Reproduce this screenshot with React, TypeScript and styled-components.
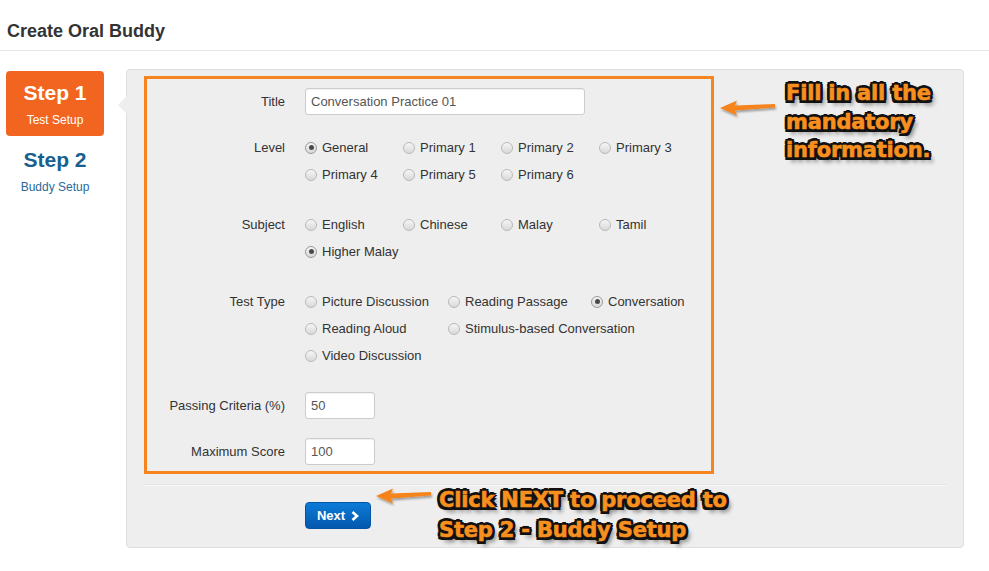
import React from "react";
import styled, { createGlobalStyle } from "styled-components";

const Global = createGlobalStyle`
  html, body { margin: 0; padding: 0; background: #fff; }
  body { font-family: "Liberation Sans", Arial, sans-serif; color: #333; }
  * { box-sizing: border-box; }
`;

const Page = styled.div`
  width: 989px;
  min-height: 571px;
`;

const Header = styled.header`
  height: 51px;
  padding: 21px 0 0 7px;
  border-bottom: 1px solid #e6e6e6;
`;

const PageTitle = styled.h1`
  margin: 0;
  font-size: 18px;
  line-height: 20px;
  font-weight: bold;
  color: #333;
`;

const Main = styled.div`
  display: flex;
  align-items: flex-start;
  gap: 22px;
  padding: 18px 0 0 6px;
`;

const Sidebar = styled.nav`
  width: 98px;
  padding-top: 2px;
  display: flex;
  flex-direction: column;
`;

const StepBox = styled.div<{ $active?: boolean }>`
  border-radius: 4px;
  text-align: center;
  padding: ${(p) => (p.$active ? "10px 0 8px" : "12px 0 0")};
  background: ${(p) => (p.$active ? "#f26521" : "transparent")};
  color: ${(p) => (p.$active ? "#fff" : "#17608f")};
`;

const StepTitle = styled.div`
  font-size: 21px;
  line-height: 24px;
  font-weight: bold;
`;

const StepSub = styled.div<{ $active?: boolean }>`
  margin-top: 7px;
  font-size: 12px;
  line-height: 16px;
  color: ${(p) => (p.$active ? "#fff" : "#2b6a99")};
`;

const Panel = styled.section`
  position: relative;
  width: 838px;
  background: #eeeeee;
  border: 1px solid #dedede;
  border-radius: 4px;
  padding: 6px 17px 2px 17px;
  &::before {
    content: "";
    position: absolute;
    left: -9px;
    top: 26px;
    border-top: 9px solid transparent;
    border-bottom: 9px solid transparent;
    border-right: 9px solid #eeeeee;
  }
`;

const TopRow = styled.div`
  display: flex;
  align-items: flex-start;
`;

const Highlight = styled.div`
  width: 570px;
  border: 3px solid #f7851f;
  padding: 9px 0 6px 0;
`;

const Row = styled.div<{ $gap?: number }>`
  display: grid;
  grid-template-columns: 138px auto;
  column-gap: 20px;
  align-items: start;
  margin-top: ${(p) => p.$gap ?? 0}px;
`;

const Label = styled.label`
  text-align: right;
  font-size: 13px;
  line-height: 27px;
  color: #333;
`;

const TextInput = styled.input<{ $w: number }>`
  width: ${(p) => p.$w}px;
  height: 27px;
  border: 1px solid #cccccc;
  border-radius: 3px;
  background: #fff;
  padding: 0 5px;
  font-family: "Liberation Sans", Arial, sans-serif;
  font-size: 13px;
  color: #555;
  box-shadow: inset 0 1px 1px rgba(0, 0, 0, 0.06);
  outline: none;
`;

const RadioGrid = styled.div<{ $col: number; $cols: number }>`
  display: grid;
  grid-template-columns: repeat(${(p) => p.$cols}, ${(p) => p.$col}px);
  grid-auto-rows: 27px;
`;

const RadioItem = styled.label<{ $newRow?: boolean }>`
  display: flex;
  align-items: center;
  white-space: nowrap;
  font-size: 13px;
  color: #333;
  grid-column-start: ${(p) => (p.$newRow ? 1 : "auto")};
`;

const RadioDot = styled.span<{ $checked?: boolean }>`
  width: 12px;
  height: 12px;
  margin-right: 5px;
  border-radius: 50%;
  border: 1px solid ${(p) => (p.$checked ? "#9a9a9a" : "#b9b9b9")};
  background: linear-gradient(#f6f6f6, #d9d9d9);
  display: flex;
  align-items: center;
  justify-content: center;
  flex: none;
  &::after {
    content: "";
    width: 5px;
    height: 5px;
    border-radius: 50%;
    background: ${(p) => (p.$checked ? "#4a4a4a" : "transparent")};
  }
`;

const Callout = styled.div<{ $top: number; $left: number; $gap: number }>`
  display: flex;
  align-items: flex-start;
  margin: ${(p) => p.$top}px 0 0 ${(p) => p.$left}px;
  gap: ${(p) => p.$gap}px;
`;

const ArrowSvg = styled.svg<{ $top: number }>`
  flex: none;
  margin-top: ${(p) => p.$top}px;
  overflow: visible;
`;

const CalloutText = styled.div<{ $lh: number }>`
  font-family: "DejaVu Sans", Verdana, sans-serif;
  font-weight: bold;
  font-size: 21px;
  line-height: ${(p) => p.$lh}px;
  color: #f7901e;
  letter-spacing: -0.2px;
  -webkit-text-stroke: 0.6px #f7901e;
  text-shadow: -2.5px -2.5px 0 #111, 2.5px -2.5px 0 #111, -2.5px 2.5px 0 #111,
    2.5px 2.5px 0 #111, 0 -3px 0 #111, 0 3px 0 #111, -3px 0 0 #111, 3px 0 0 #111,
    4px 5px 4px rgba(0, 0, 0, 0.5);
  white-space: nowrap;
`;

const Actions = styled.div`
  margin-top: 10px;
  border-top: 1px solid #e2e2e2;
  box-shadow: inset 0 1px 0 #f8f8f8;
  padding-left: 161px;
  display: flex;
  align-items: center;
`;

const NextButton = styled.button`
  width: 66px;
  height: 27px;
  border: 1px solid #0553a3;
  border-radius: 4px;
  background: linear-gradient(#0b7bd8, #0558ad);
  color: #fff;
  font-family: "Liberation Sans", Arial, sans-serif;
  font-size: 13px;
  font-weight: bold;
  display: flex;
  align-items: center;
  justify-content: center;
  gap: 6px;
  padding: 0;
  margin-top: 1px;
`;

const Chevron = () => (
  <svg width="8" height="10" viewBox="0 0 8 10">
    <path d="M1.5 1 L6 5 L1.5 9" stroke="#fff" strokeWidth="2.6" fill="none" />
  </svg>
);

const Arrow = ({ top }: { top: number }) => (
  <ArrowSvg $top={top} width="56" height="20" viewBox="0 0 56 20">
    <defs>
      <filter id="sh" x="-20%" y="-50%" width="140%" height="200%">
        <feDropShadow dx="1" dy="2" stdDeviation="1.2" floodColor="#000" floodOpacity="0.35" />
      </filter>
    </defs>
    <polygon
      points="0,11 17,3.5 15,8.5 55,7 55,10.5 15,13.5 17,18.5"
      fill="#f5841f"
      filter="url(#sh)"
    />
  </ArrowSvg>
);

type Opt = { label: string; checked?: boolean; newRow?: boolean };

const RadioGroup = ({ opts, col, cols }: { opts: Opt[]; col: number; cols: number }) => (
  <RadioGrid $col={col} $cols={cols}>
    {opts.map((o) => (
      <RadioItem key={o.label} $newRow={o.newRow}>
        <RadioDot $checked={o.checked} />
        {o.label}
      </RadioItem>
    ))}
  </RadioGrid>
);

export default function App() {
  return (
    <Page>
      <Global />
      <Header>
        <PageTitle>Create Oral Buddy</PageTitle>
      </Header>
      <Main>
        <Sidebar>
          <StepBox $active>
            <StepTitle>Step 1</StepTitle>
            <StepSub $active>Test Setup</StepSub>
          </StepBox>
          <StepBox>
            <StepTitle>Step 2</StepTitle>
            <StepSub>Buddy Setup</StepSub>
          </StepBox>
        </Sidebar>
        <Panel>
          <TopRow>
            <Highlight>
              <Row>
                <Label>Title</Label>
                <TextInput $w={280} defaultValue="Conversation Practice 01" />
              </Row>
              <Row $gap={19}>
                <Label>Level</Label>
                <RadioGroup
                  col={98}
                  cols={4}
                  opts={[
                    { label: "General", checked: true },
                    { label: "Primary 1" },
                    { label: "Primary 2" },
                    { label: "Primary 3" },
                    { label: "Primary 4" },
                    { label: "Primary 5" },
                    { label: "Primary 6" },
                  ]}
                />
              </Row>
              <Row $gap={23}>
                <Label>Subject</Label>
                <RadioGroup
                  col={98}
                  cols={4}
                  opts={[
                    { label: "English" },
                    { label: "Chinese" },
                    { label: "Malay" },
                    { label: "Tamil" },
                    { label: "Higher Malay", checked: true },
                  ]}
                />
              </Row>
              <Row $gap={23}>
                <Label>Test Type</Label>
                <RadioGroup
                  col={143}
                  cols={3}
                  opts={[
                    { label: "Picture Discussion" },
                    { label: "Reading Passage" },
                    { label: "Conversation", checked: true },
                    { label: "Reading Aloud" },
                    { label: "Stimulus-based Conversation" },
                    { label: "Video Discussion", newRow: true },
                  ]}
                />
              </Row>
              <Row $gap={23}>
                <Label>Passing Criteria (%)</Label>
                <TextInput $w={70} defaultValue="50" />
              </Row>
              <Row $gap={19}>
                <Label>Maximum Score</Label>
                <TextInput $w={70} defaultValue="100" />
              </Row>
            </Highlight>
            <Callout $top={3} $left={6} $gap={10}>
              <Arrow top={18} />
              <CalloutText $lh={28.5}>
                Fill in all the
                <br />
                mandatory
                <br />
                information.
              </CalloutText>
            </Callout>
          </TopRow>
          <Actions>
            <NextButton>
              Next <Chevron />
            </NextButton>
            <Callout $top={0} $left={5} $gap={7}>
              <Arrow top={0} />
              <CalloutText $lh={30}>
                Click NEXT to proceed to
                <br />
                Step 2 - Buddy Setup
              </CalloutText>
            </Callout>
          </Actions>
        </Panel>
      </Main>
    </Page>
  );
}
